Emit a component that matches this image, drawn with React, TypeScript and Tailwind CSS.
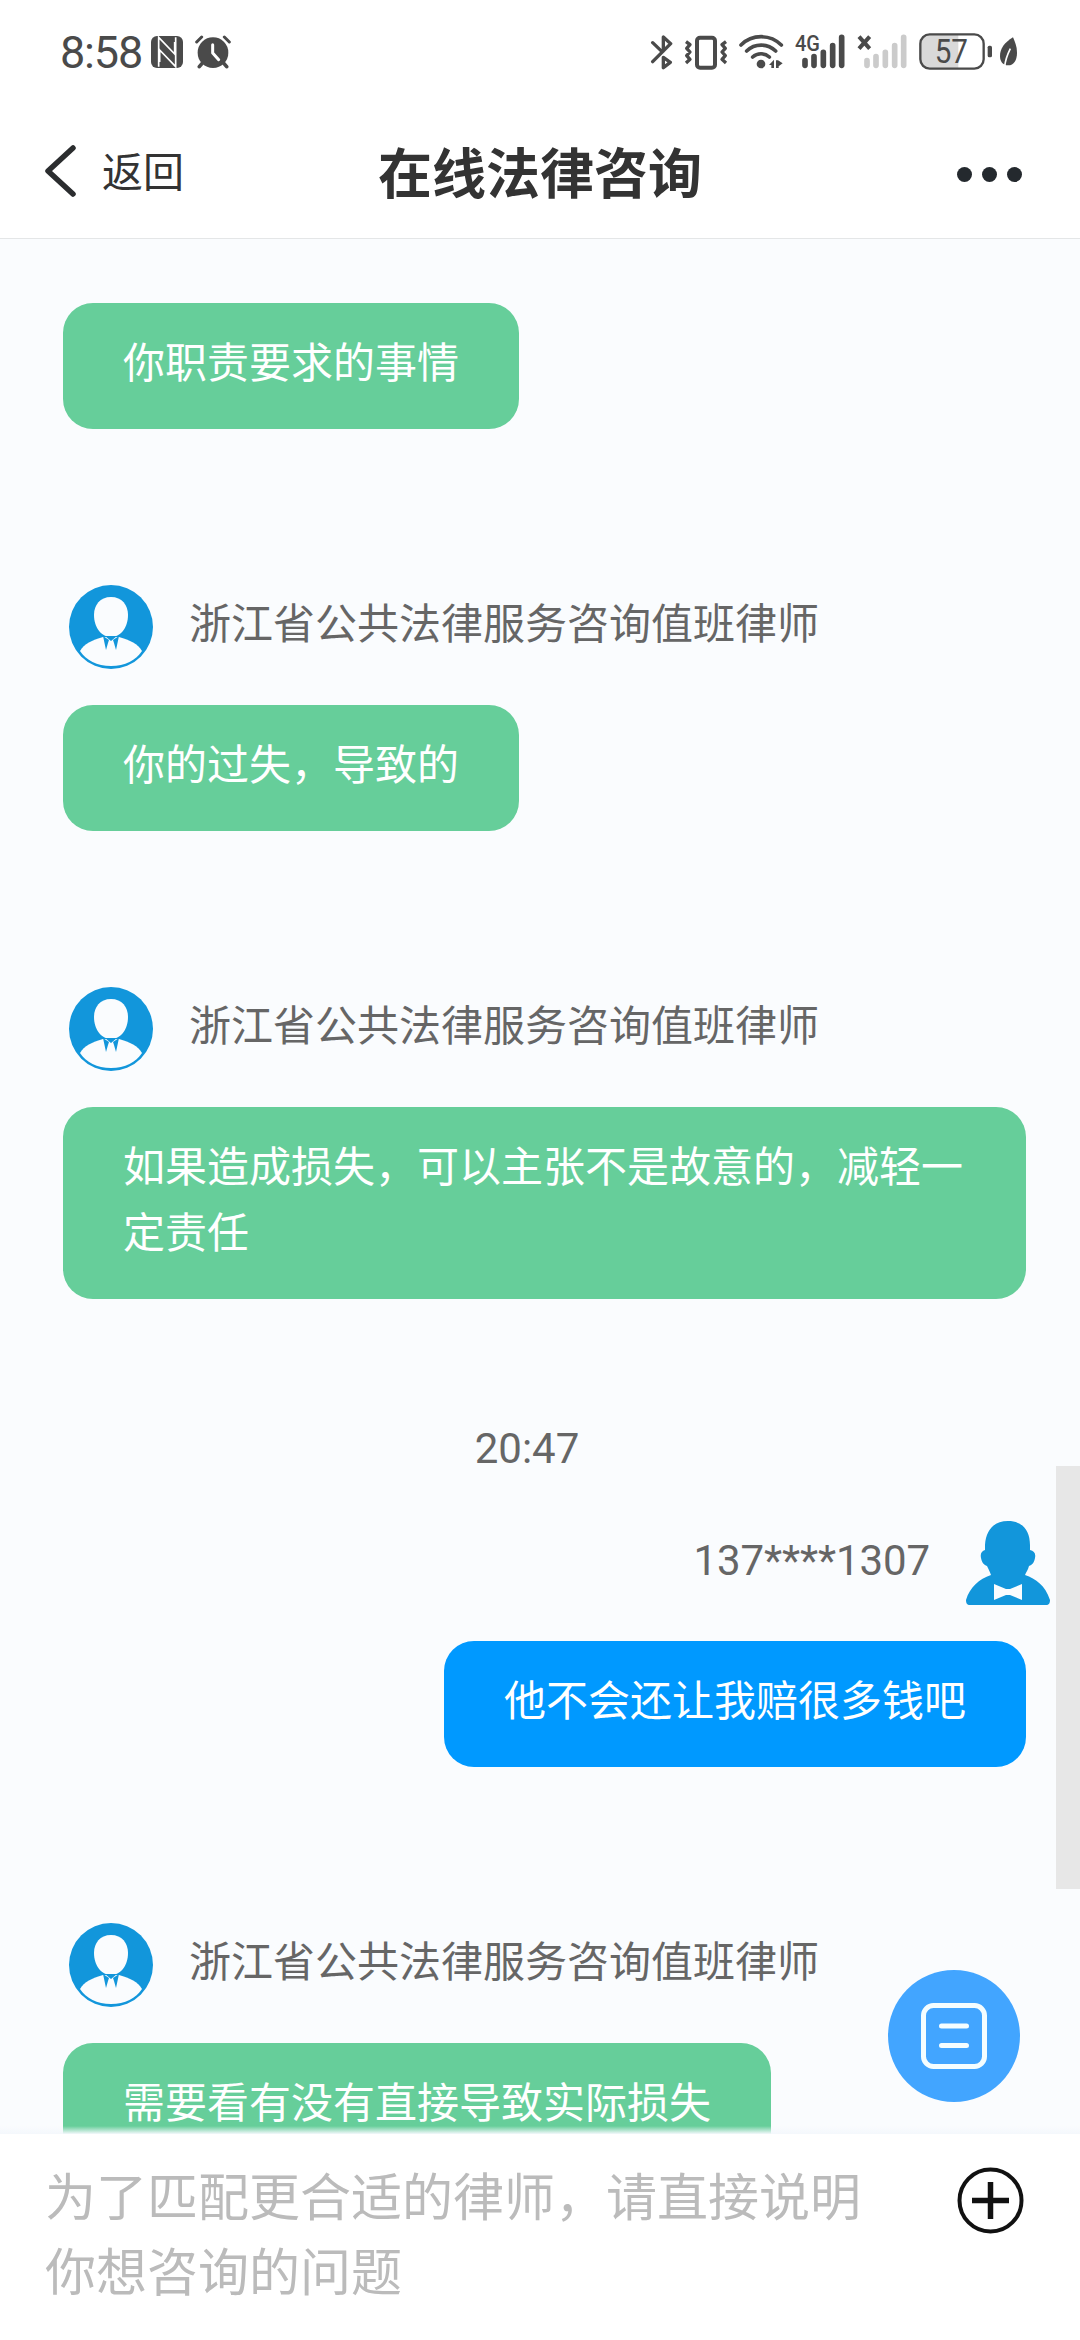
import type { ReactNode } from 'react'

type Message = {
  id: number
  from: 'lawyer' | 'user'
  name?: string
  text: string
}

const LAWYER = '浙江省公共法律服务咨询值班律师'

const earlier: Message[] = [
  { id: 1, from: 'lawyer', text: '你职责要求的事情' },
  { id: 2, from: 'lawyer', name: LAWYER, text: '你的过失，导致的' },
  { id: 3, from: 'lawyer', name: LAWYER, text: '如果造成损失，可以主张不是故意的，减轻一定责任' },
]

const later: Message[] = [
  { id: 4, from: 'user', name: '137****1307', text: '他不会还让我赔很多钱吧' },
  { id: 5, from: 'lawyer', name: LAWYER, text: '需要看有没有直接导致实际损失' },
]

const NfcIcon = () => (
  <svg className="w-8 h-8" viewBox="0 0 96 96" fill="none">
    <rect x="0" y="0" width="96" height="96" rx="18" fill="#4a4a4a" />
    <path d="M23 92V4l48 50V18" stroke="#fff" strokeWidth="5" />
    <path d="M74 4v88L26 42v36" stroke="#fff" strokeWidth="5" />
  </svg>
)

const AlarmIcon = () => (
  <svg className="w-[36px] h-[34px]" viewBox="0 0 108 102" fill="none" strokeLinecap="round">
    <path d="M5 21L20 6M103 21L88 6" stroke="#4a4a4a" strokeWidth="9" />
    <path d="M24 82L13 95M84 82l11 13" stroke="#4a4a4a" strokeWidth="11" />
    <circle cx="54" cy="53" r="46" fill="#4a4a4a" />
    <path d="M53 29v25l18 20" stroke="#fff" strokeWidth="9" strokeLinejoin="round" />
  </svg>
)

const BluetoothIcon = () => (
  <svg className="w-6 h-10" viewBox="0 0 72 120" fill="none" stroke="#4a4a4a" strokeWidth="10" strokeLinecap="round" strokeLinejoin="round">
    <path d="M8 38l28 27M8 95l54-54-22-20v42M40 82l21 15-21 16z" />
  </svg>
)

const VibrateIcon = () => (
  <svg className="w-[44px] h-10" viewBox="0 0 132 120" fill="none" stroke="#4a4a4a">
    <rect x="39" y="23" width="54" height="90" rx="9" strokeWidth="12" />
    <path d="M6 35l12 9-10 11 10 11-10 11 10 11-12 11M126 35l-12 9 10 11-10 11 10 11-10 11 12 11" strokeWidth="10" strokeLinejoin="round" />
  </svg>
)

const WifiIcon = () => (
  <svg className="w-[45px] h-10" viewBox="0 0 135 120" fill="none" stroke="#4a4a4a" strokeWidth="11" strokeLinecap="round">
    <path d="M6 45a86 86 0 0 1 121 0" />
    <path d="M23 63a62 62 0 0 1 87 0" />
    <path d="M41 81a37 37 0 0 1 50 0" />
    <circle cx="66" cy="102" r="13" fill="#4a4a4a" stroke="none" />
    <path d="M90 105l15-16v25h-8v-9zM131 100l-12 9v5h-8V91h6z" fill="#4a4a4a" stroke="none" />
  </svg>
)

const SignalBars = ({ color }: { color: string }) => (
  <g stroke={color} strokeWidth="17" strokeLinecap="round">
    <path d="M30 92v14M57 80v26M85 67v39M113 47v59M140 22v84" />
  </g>
)

const MobileSignal = () => (
  <svg className="w-[51px] h-10" viewBox="0 0 153 120">
    <SignalBars color="#4a4a4a" />
    <text x="0" y="64" fontFamily="Roboto, sans-serif" fontSize="67" fontWeight="500" fill="#4a4a4a" stroke="#fff" strokeWidth="6" paintOrder="stroke" textLength="75" lengthAdjust="spacingAndGlyphs">4G</text>
  </svg>
)

const NoSignal = () => (
  <svg className="w-[51px] h-10" viewBox="0 0 153 120">
    <SignalBars color="#cbcbcb" />
    <path d="M6 20l32 36M38 20L6 56" stroke="#4a4a4a" strokeWidth="12" />
  </svg>
)

const BatteryIcon = () => (
  <svg className="w-[74px] h-10" viewBox="0 0 222 120">
    <path d="M30 14h88v100H30a26 26 0 0 1-26-26V40a26 26 0 0 1 26-26z" fill="#d9d9d9" />
    <rect x="4" y="13" width="190" height="103" rx="28" fill="none" stroke="#4a4a4a" strokeWidth="7" />
    <rect x="206" y="47" width="13" height="35" rx="5" fill="#4a4a4a" />
    <text x="97" y="99" textAnchor="middle" fontFamily="Roboto, sans-serif" fontSize="98" fill="#4a4a4a" textLength="100" lengthAdjust="spacingAndGlyphs">57</text>
  </svg>
)

const LeafIcon = () => (
  <svg className="w-[19px] h-10" viewBox="0 0 57 120">
    <path d="M42 22C16 38 3 56 3 78c0 16 8 28 24 28 18 0 27-16 27-38 0-18-6-32-12-46z" fill="#4a4a4a" />
    <path d="M34 56C25 74 19 90 17 110" stroke="#fff" strokeWidth="5" fill="none" />
  </svg>
)

const StatusBar = () => (
  <div className="h-[104px] pl-[60px] pr-[62px] flex justify-between">
    <div className="flex h-[104px] items-center text-[#4a4a4a]">
      <span className="w-[91px] pt-0.5 text-[45px] leading-[52px] tracking-[-1.2px]">8:58</span>
      <NfcIcon />
      <span className="w-3" />
      <AlarmIcon />
    </div>
    <div className="flex pt-[30px]">
      <BluetoothIcon />
      <span className="w-2.5" />
      <VibrateIcon />
      <span className="w-[11px]" />
      <WifiIcon />
      <span className="w-[11px]" />
      <MobileSignal />
      <span className="w-[11px]" />
      <NoSignal />
      <span className="w-[11px]" />
      <BatteryIcon />
      <span className="w-1.5" />
      <LeafIcon />
    </div>
  </div>
)

const NavBar = () => (
  <div className="h-[134px] grid grid-cols-[1fr_auto_1fr] px-11">
    <button className="flex items-center h-[134px]">
      <svg className="w-8 h-[54px]" viewBox="0 0 32 54" fill="none" stroke="#2b2d2f" strokeWidth="5.5" strokeLinecap="round" strokeLinejoin="round">
        <path d="M29 4L4 27l25 23" />
      </svg>
      <span className="ml-[26px] pt-[3px] text-[41px] leading-[60px] text-[#333]">返回</span>
    </button>
    <h1 className="text-[54px] leading-[138px] pt-[3px] h-[134px] font-bold text-[#333]">在线法律咨询</h1>
    <button className="flex items-center justify-end gap-[10px] h-[134px] pt-[6px] pr-[14px]">
      <i className="size-[15px] rounded-full bg-[#24292e]" />
      <i className="size-[15px] rounded-full bg-[#24292e]" />
      <i className="size-[15px] rounded-full bg-[#24292e]" />
    </button>
  </div>
)

const LawyerAvatar = () => (
  <svg className="size-21" viewBox="0 0 84 84">
    <circle cx="42" cy="42" r="42" fill="#1296db" />
    <path d="M42 12c11 0 17 8 17 18 0 12-7 22-17 22s-17-10-17-22c0-10 6-18 17-18z" fill="#fafcfe" />
    <path d="M34 52l16 0c11 3 19 7 23 14-6 9-17 15-31 15S17 75 11 66c4-7 12-11 23-14z" fill="#fafcfe" />
    <path d="M34 51l3 14 2-7 1-3zM50 51l-3 14-2-7-1-3zM36 51h12l-6 5z" fill="#1296db" />
  </svg>
)

const UserAvatar = () => (
  <svg className="size-21" viewBox="0 0 84 84">
    <path d="M42 0c14 0 22 9 22 24v5c4 1 6 3 5 8s-3 7-6 8c-1 4-3 6-4 9 11 4 20 10 25 25 0 3-1 5-4 5H4c-3 0-4-2-4-5 4-13 13-21 25-25-1-3-2-5-4-9-3-1-5-3-6-8s1-7 4-8v-5C20 9 28 0 42 0z" fill="#1296db" />
    <path d="M28 63l12 5h4l12-5v16l-12-5h-4l-12 5z" fill="#fafcfe" />
  </svg>
)

const Bubble = ({ mine, children }: { mine: boolean; children: ReactNode }) => (
  <div
    className={`w-fit max-w-[963px] rounded-[30px] px-15 pt-7 pb-8 text-[42px] leading-[66px] text-white ${
      mine ? 'bg-[#0099ff]' : 'bg-[#66ce9a]'
    }`}
  >
    {children}
  </div>
)

const ChatMessage = ({ message }: { message: Message }) => {
  const mine = message.from === 'user'
  return (
    <div className={`flex flex-col ${mine ? 'items-end' : 'items-start'}`}>
      {message.name && (
        <div className={`h-21 mb-9 flex gap-9 ${mine ? 'flex-row-reverse -mr-6' : 'ml-1.5'}`}>
          {mine ? <UserAvatar /> : <LawyerAvatar />}
          <span className={`text-[42px] leading-[80px] text-[#666] ${mine ? 'tracking-[-0.1px]' : ''}`}>{message.name}</span>
        </div>
      )}
      <Bubble mine={mine}>{message.text}</Bubble>
    </div>
  )
}

export default function App() {
  return (
    <div className="relative w-[1080px] h-[2340px] flex flex-col overflow-hidden bg-white font-[Roboto,'Noto_Sans_CJK_SC',sans-serif]">
      <header className="h-[239px] shrink-0 border-b border-[#e4e6e7]">
        <StatusBar />
        <NavBar />
      </header>

      <main className="flex-1 min-h-0 overflow-hidden bg-[#fafcfe] pt-16 pl-[63px] pr-[54px]">
        <div className="flex flex-col gap-39">
          {earlier.map((m) => (
            <ChatMessage key={m.id} message={m} />
          ))}
        </div>
        <p className="mt-[117px] mb-[39px] pr-[35px] text-center text-[42px] leading-[66px] text-[#666]">20:47</p>
        <div className="flex flex-col gap-39">
          {later.map((m) => (
            <ChatMessage key={m.id} message={m} />
          ))}
        </div>
      </main>

      <footer className="relative h-[206px] shrink-0 bg-white pl-[45px] pr-[56px] pt-[27px] flex justify-between">
        {/* soft edge over the message list */}
        <div className="absolute inset-x-0 -top-2 h-2 bg-linear-to-b from-[#f4f8fc]/0 to-[#f4f8fc]" />
        <p className="w-[830px] text-[51px] leading-[75px] text-[#bbb]">为了匹配更合适的律师，请直接说明你想咨询的问题</p>
        <svg className="mt-[6px] w-[67px] h-[67px] shrink-0" viewBox="0 0 67 67" fill="none" stroke="#111">
          <circle cx="33.5" cy="33.5" r="31" strokeWidth="4" />
          <path d="M15 33.5h37M33.5 15v37" strokeWidth="5.5" />
        </svg>
      </footer>

      {/* scroll thumb */}
      <div className="absolute right-0 top-[1466px] w-6 h-[423px] bg-[#e7e7e7]" />

      <button className="absolute left-[888px] top-[1970px] size-33 rounded-full bg-[#42a5ff] flex items-center justify-center">
        <svg className="w-[66px] h-[66px]" viewBox="0 0 66 66" fill="none" stroke="#f4fdff" strokeWidth="5" strokeLinecap="round">
          <rect x="2.5" y="2.5" width="61" height="61" rx="10" />
          <path d="M20.5 23h25M20.5 42.5h25" />
        </svg>
      </button>
    </div>
  )
}
